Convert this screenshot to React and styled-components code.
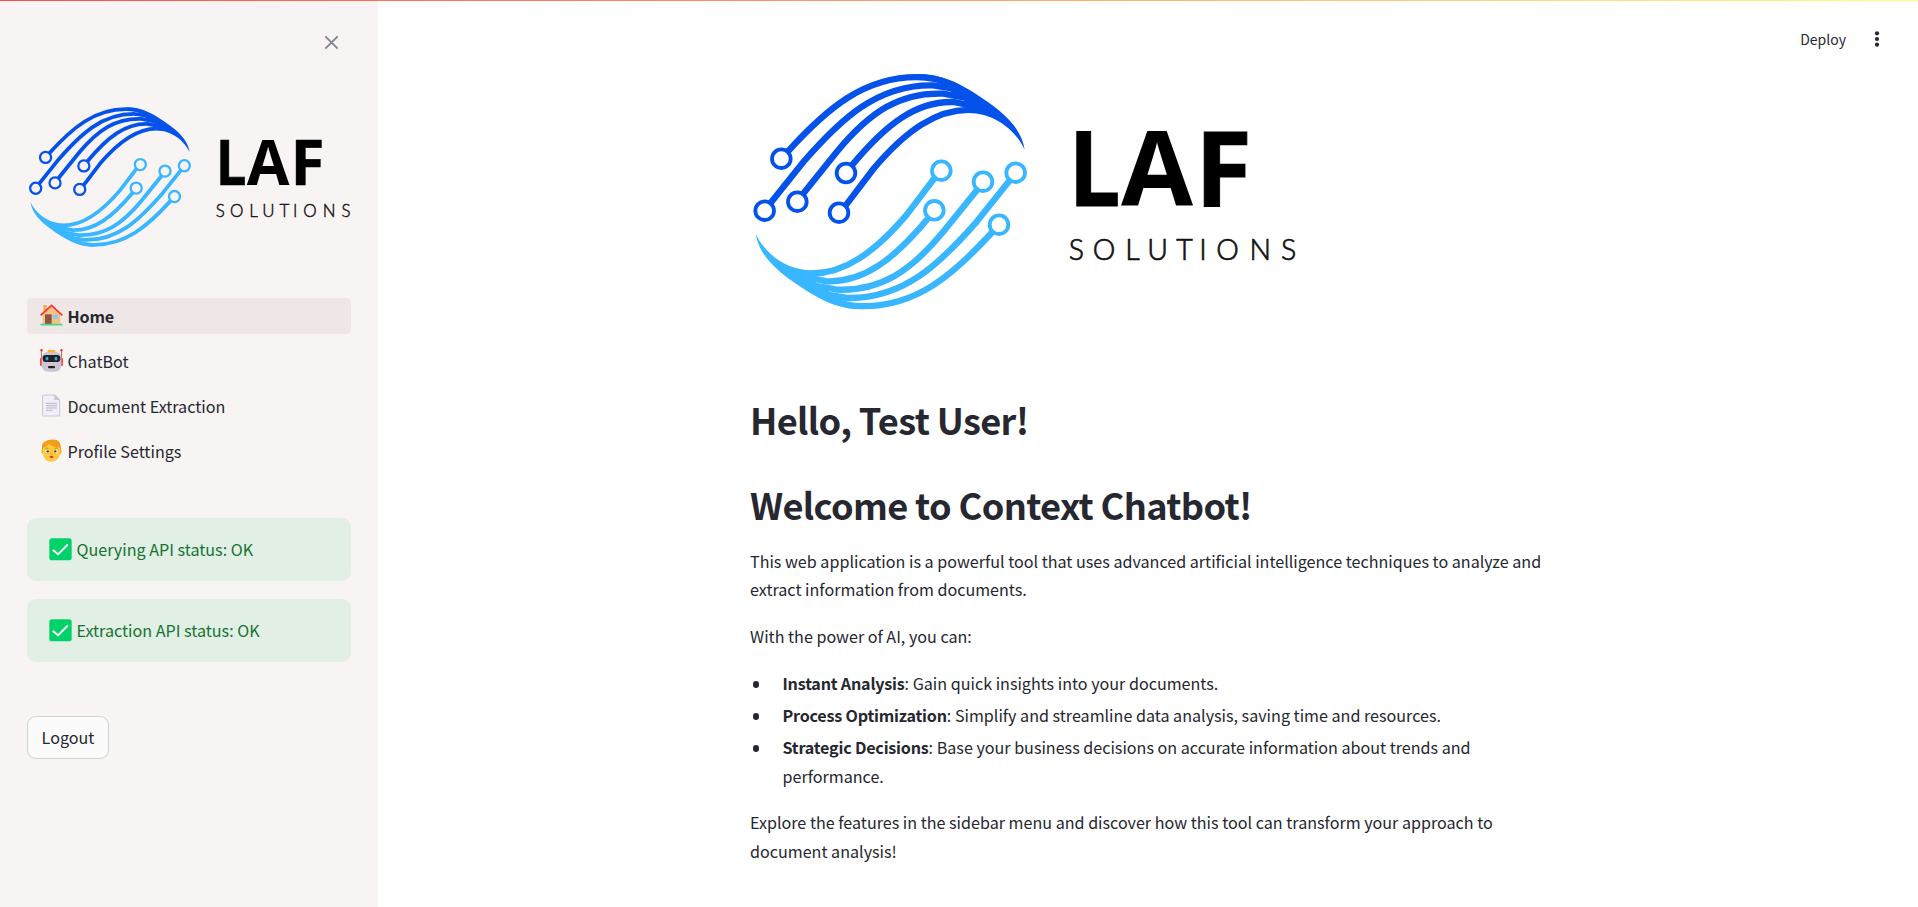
import React from "react";
import styled, { createGlobalStyle } from "styled-components";

const GlobalStyle = createGlobalStyle`
  *, *::before, *::after { box-sizing: border-box; }
  html, body { margin: 0; padding: 0; background: #fff; overflow: hidden; }
  body {
    font-family: "Noto Sans CJK JP", "Noto Sans CJK SC", "Noto Sans", sans-serif;
    font-size: 16.12px;
    line-height: 28.8px;
    color: #262730;
  }
`;

const Page = styled.div`
  display: grid;
  grid-template-columns: 378px 1fr;
  grid-template-rows: 1px 1fr;
  height: 907px;
`;

const Decoration = styled.div`
  grid-column: 1 / -1;
  background: linear-gradient(90deg, #ff4b4b, #fffd80);
`;

const Sidebar = styled.aside`
  background: #f7f4f3;
  padding: 0 27px;
`;

const SidebarHeader = styled.div`
  display: flex;
  justify-content: flex-end;
  height: 98px;
  padding: 34px 12px 0 0;
`;

const CloseButton = styled.button`
  width: 15px;
  height: 15px;
  padding: 0;
  border: 0;
  background: none;
  svg { display: block; }
`;

const LogoSvg = styled.svg`
  display: block;
  width: ${(p) => p.$width}px;
  height: ${(p) => p.$width * (260 / 547)}px;
`;

const Nav = styled.nav`
  display: flex;
  flex-direction: column;
  gap: 9px;
  margin-top: 45px;
`;

const NavItem = styled.a`
  display: flex;
  align-items: center;
  gap: 4.5px;
  height: 36px;
  padding: 0 13px;
  border-radius: 4.5px;
  background: ${(p) => (p.$active ? "#efe7e5" : "transparent")};
  font-weight: ${(p) => (p.$active ? 600 : 400)};
  letter-spacing: ${(p) => (p.$active ? "-0.2px" : "normal")};
  svg { flex: none; margin-bottom: 2px; }
`;

const Alerts = styled.div`
  display: flex;
  flex-direction: column;
  gap: 18px;
  margin-top: 49px;
`;

const Alert = styled.div`
  display: flex;
  align-items: center;
  gap: 4.5px;
  height: 63px;
  padding: 0 22px;
  border-radius: 9px;
  background: #e1efe4;
  color: #177233;
  svg { flex: none; }
`;

const Logout = styled.button`
  display: block;
  width: 82px;
  height: 43px;
  margin-top: 54px;
  padding: 0 0 1px;
  border: 1px solid #d3d1d2;
  border-radius: 9px;
  background: #fcfbfb;
  color: inherit;
  font: inherit;
`;

const Main = styled.main`
  display: flex;
  flex-direction: column;
`;

const Toolbar = styled.header`
  display: flex;
  justify-content: flex-end;
  align-items: center;
  gap: 27px;
  height: 59px;
  padding: 17px 37px 0 0;
  font-size: 14px;
  line-height: 20px;
  svg { display: block; }
`;

const Content = styled.section`
  width: 796px;
  margin: 0 auto;
`;

const Heading = styled.h1`
  margin: ${(p) => p.$top}px 0 0;
  font-size: 36.2px;
  line-height: 49px;
  font-weight: 600;
  letter-spacing: -0.65px;
  white-space: nowrap;
`;

const Copy = styled.div`
  margin-top: 17.5px;
  display: flex;
  flex-direction: column;
  gap: 18px;
  p { margin: 0; }
`;

const List = styled.ul`
  display: flex;
  flex-direction: column;
  gap: 3.2px;
  margin: 0;
  padding: 0 0 0 32.5px;
  list-style: none;
`;

const Item = styled.li`
  position: relative;
  &::before {
    content: "";
    position: absolute;
    left: -30px;
    top: 12.4px;
    width: 6.5px;
    height: 6.5px;
    border-radius: 50%;
    background: #262730;
  }
  strong { font-weight: 600; letter-spacing: -0.2px; }
`;

function Strands() {
  return (
    <>
      <g fill="none" stroke="currentColor" strokeWidth="19">
        <path d="M144 274C262 144 372 51.500 530 51.500C570 51.500 600 58 630 72" />
        <path d="M91 430L190 306C300 180 410 72 580 76L640 86" />
        <path d="M187 404L290 276C390 155 480 96 610 101L670 112" />
        <path d="M334 318C440 190 530 123 640 126L700 138" />
        <path d="M315 439L400 327C500 209 590 149.500 685 149.500" />
        <g strokeWidth="11.500">
          <circle cx="124" cy="296" r="28" />
          <circle cx="74" cy="452" r="28" />
          <circle cx="172" cy="425" r="28" />
          <circle cx="318" cy="339" r="28" />
          <circle cx="297" cy="458" r="28" />
        </g>
      </g>
      <path
        fill="currentColor"
        d="M530 42C600 42 650 65 700 97C775 145 843 195 854 269C830 217 770 159 684 159L684 141L694 140L662 115L629 92L598 68Z"
      />
    </>
  );
}

function Logo({ width }) {
  return (
    <LogoSvg $width={width} viewBox="0 0 547 260" role="img" aria-label="LAF Solutions">
      <g transform="translate(-10 0) scale(.33333)">
        <g color="#0552ea"><Strands /></g>
        <g color="#38b6ff" transform="rotate(180 450.5 395)"><Strands /></g>
      </g>
      <g fontFamily="Open Sans, sans-serif" fontWeight="700" fontSize="104.500" fill="#000">
        <text transform="translate(318.500 146) scale(.88 1)" stroke="#000" strokeWidth="1">L</text>
        <text x="371" y="146">A</text>
        <text x="444.700" y="146" stroke="#000" strokeWidth=".8">F</text>
      </g>
      <text
        y="199.700"
        x="318.700 342.700 375.200 397.200 426.200 449.200 466.200 499.500 531"
        fontFamily="Lato, sans-serif"
        fontWeight="300"
        fontSize="28.500"
        fill="#111"
        stroke="#111"
        strokeWidth=".7"
      >
        SOLUTIONS
      </text>
    </LogoSvg>
  );
}

const House = () => (
  <svg width="23" height="23" viewBox="0 0 69 69">
    <path d="M10 3h10v20H10z" fill="#f3ad61" />
    <path d="M8 59V29L35 5l26 25v29z" fill="#f5c27f" />
    <path d="M2 34L34.500 4L67 34" fill="none" stroke="#f8312f" strokeWidth="5" />
    <path d="M15 31h20v29H15z" fill="#8f5544" />
    <circle cx="31" cy="45" r="2" fill="#5c3a31" />
    <path d="M39 32h14v13H39z" fill="#82caff" />
    <rect x="1" y="59" width="67" height="5.500" rx="2.700" fill="#3fdc8c" />
  </svg>
);

const Robot = () => (
  <svg width="23" height="23" viewBox="0 0 69 69">
    <path d="M4.500 4v45M64.500 4v45" stroke="#f8535a" strokeWidth="3" />
    <rect x="0" y="26" width="9" height="25" rx="4" fill="#f8434a" />
    <rect x="60" y="26" width="9" height="25" rx="4" fill="#f8434a" />
    <circle cx="4.500" cy="3.500" r="3.500" fill="#f8312f" />
    <circle cx="64.500" cy="3.500" r="3.500" fill="#f8312f" />
    <rect x="5" y="8" width="59" height="60" rx="19" fill="#cdc4d6" />
    <path d="M23 10V5q0-2 3-2h17q3 0 3 2v5z" fill="#ffb02e" />
    <rect x="8" y="18" width="53" height="21" rx="9" fill="#212121" />
    <rect x="17" y="24" width="8" height="10" rx="2" fill="#26a9e8" />
    <rect x="44" y="24" width="8" height="10" rx="2" fill="#26a9e8" />
    <rect x="24" y="51" width="21" height="7" rx="3" fill="#212121" />
  </svg>
);

const Document = () => (
  <svg width="23" height="23" viewBox="0 0 69 69">
    <path d="M10 3h35l14 15v48H10q-2 0-2-2V5q0-2 2-2z" fill="#f3eef8" stroke="#cdc4d6" strokeWidth="3" />
    <path d="M43 2v16h17z" fill="#cdc4d6" />
    <path d="M18 28h33M18 35h33M18 42h33M18 49h20" stroke="#b1a4bd" strokeWidth="2.500" />
  </svg>
);

const Person = () => (
  <svg width="23" height="23" viewBox="0 0 69 69">
    <path d="M6 24q-1-12 8-16Q30-2 50 3q15 6 13 35H6z" fill="#f39d1b" />
    <ellipse cx="8" cy="38" rx="4" ry="7" fill="#ffb92e" />
    <ellipse cx="61" cy="38" rx="4" ry="7" fill="#ffb92e" />
    <path d="M9 26q9-1 17-12 13 10 34 12v17q-2 24-25.500 25T9 43z" fill="#ffc83d" />
    <path d="M16 29q5-4 9 0M44 29q5-4 9 0" fill="none" stroke="#ca7b1b" strokeWidth="2.500" />
    <circle cx="21" cy="37" r="5" fill="#fff" />
    <circle cx="48" cy="37" r="5" fill="#fff" />
    <circle cx="23" cy="37" r="3.500" fill="#463a35" />
    <circle cx="46" cy="37" r="3.500" fill="#463a35" />
    <path d="M30 44q4.500 4 9 0" fill="none" stroke="#f59a22" strokeWidth="3" />
    <path d="M28 52h13q-2 5-6.500 5T28 52z" fill="#bb1d42" />
  </svg>
);

const Check = () => (
  <svg width="23" height="23" viewBox="0 0 69 69">
    <rect x="1" y="1" width="67" height="66" rx="8" fill="#00d26a" />
    <path d="M13 37l14 12L55 21" fill="none" stroke="#fff" strokeWidth="6" strokeLinecap="round" strokeLinejoin="round" />
  </svg>
);

const Close = () => (
  <svg width="15" height="15" viewBox="0 0 15 15">
    <path d="M1.300 1.300l12.400 12.400M13.700 1.300L1.300 13.700" stroke="#808495" strokeWidth="1.800" />
  </svg>
);

const Kebab = () => (
  <svg width="8" height="18" viewBox="0 0 8 18" fill="#262730">
    <circle cx="4" cy="3.300" r="2.100" />
    <circle cx="4" cy="9" r="2.100" />
    <circle cx="4" cy="14.700" r="2.100" />
  </svg>
);

const pages = [
  { label: "Home", Icon: House, active: true },
  { label: "ChatBot", Icon: Robot },
  { label: "Document Extraction", Icon: Document },
  { label: "Profile Settings", Icon: Person },
];

const features = [
  ["Instant Analysis", "Gain quick insights into your documents."],
  ["Process Optimization", "Simplify and streamline data analysis, saving time and resources."],
  ["Strategic Decisions", "Base your business decisions on accurate information about trends and performance."],
];

export default function App() {
  return (
    <>
      <GlobalStyle />
      <Page>
        <Decoration />
        <Sidebar>
          <SidebarHeader>
            <CloseButton aria-label="Close sidebar"><Close /></CloseButton>
          </SidebarHeader>
          <Logo width={324} />
          <Nav>
            {pages.map(({ label, Icon, active }) => (
              <NavItem key={label} $active={active}>
                <Icon />
                <span>{label}</span>
              </NavItem>
            ))}
          </Nav>
          <Alerts>
            <Alert><Check /><span>Querying API status: OK</span></Alert>
            <Alert><Check /><span>Extraction API status: OK</span></Alert>
          </Alerts>
          <Logout>Logout</Logout>
        </Sidebar>
        <Main>
          <Toolbar>
            <span>Deploy</span>
            <Kebab />
          </Toolbar>
          <Content>
            <Logo width={547} />
            <Heading $top={75}>Hello, Test User!</Heading>
            <Heading $top={36}>Welcome to Context Chatbot!</Heading>
            <Copy>
              <p>
                This web application is a powerful tool that uses advanced artificial intelligence
                techniques to analyze and extract information from documents.
              </p>
              <p>With the power of AI, you can:</p>
              <List>
                {features.map(([title, text]) => (
                  <Item key={title}><strong>{title}</strong>: {text}</Item>
                ))}
              </List>
              <p>
                Explore the features in the sidebar menu and discover how this tool can transform
                your approach to document analysis!
              </p>
            </Copy>
          </Content>
        </Main>
      </Page>
    </>
  );
}
